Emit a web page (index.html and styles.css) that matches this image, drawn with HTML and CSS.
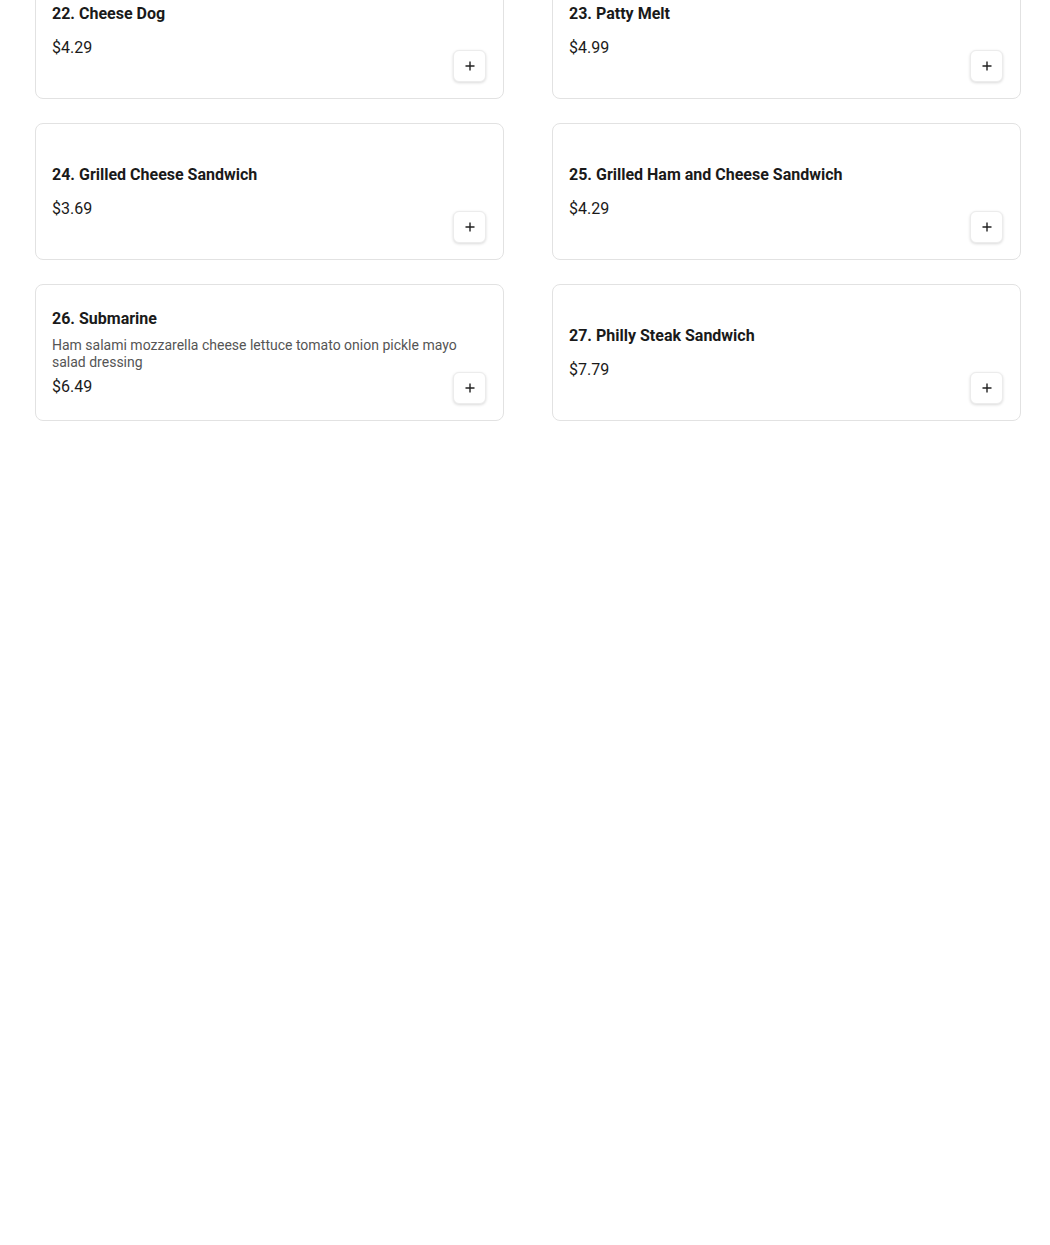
FILE: index.html
```html
<!DOCTYPE html>
<html lang="en">
<head>
    <meta charset="UTF-8">
    <meta name="viewport" content="width=device-width, initial-scale=1.0">
    <title>Menu - Sandwiches</title>
    <link rel="stylesheet" href="styles.css">
</head>
<body>
    <div class="menu-grid">
        <div class="item-card">
            <div class="item-info">
                <div class="item-name">22. Cheese Dog</div>
                <div class="item-price">$4.29</div>
            </div>
            <button class="add-btn" aria-label="Add"><svg viewBox="0 0 12 12" width="12" height="12"><path d="M6 1.5v9M1.5 6h9" stroke="#222" stroke-width="1.4" fill="none"/></svg></button>
        </div>
        <div class="item-card">
            <div class="item-info">
                <div class="item-name">23. Patty Melt</div>
                <div class="item-price">$4.99</div>
            </div>
            <button class="add-btn" aria-label="Add"><svg viewBox="0 0 12 12" width="12" height="12"><path d="M6 1.5v9M1.5 6h9" stroke="#222" stroke-width="1.4" fill="none"/></svg></button>
        </div>
        <div class="item-card">
            <div class="item-info">
                <div class="item-name">24. Grilled Cheese Sandwich</div>
                <div class="item-price">$3.69</div>
            </div>
            <button class="add-btn" aria-label="Add"><svg viewBox="0 0 12 12" width="12" height="12"><path d="M6 1.5v9M1.5 6h9" stroke="#222" stroke-width="1.4" fill="none"/></svg></button>
        </div>
        <div class="item-card">
            <div class="item-info">
                <div class="item-name">25. Grilled Ham and Cheese Sandwich</div>
                <div class="item-price">$4.29</div>
            </div>
            <button class="add-btn" aria-label="Add"><svg viewBox="0 0 12 12" width="12" height="12"><path d="M6 1.5v9M1.5 6h9" stroke="#222" stroke-width="1.4" fill="none"/></svg></button>
        </div>
        <div class="item-card">
            <div class="item-info">
                <div class="item-name">26. Submarine</div>
                <div class="item-desc">Ham salami mozzarella cheese lettuce tomato onion pickle mayo salad dressing</div>
                <div class="item-price">$6.49</div>
            </div>
            <button class="add-btn" aria-label="Add"><svg viewBox="0 0 12 12" width="12" height="12"><path d="M6 1.5v9M1.5 6h9" stroke="#222" stroke-width="1.4" fill="none"/></svg></button>
        </div>
        <div class="item-card">
            <div class="item-info">
                <div class="item-name">27. Philly Steak Sandwich</div>
                <div class="item-price">$7.79</div>
            </div>
            <button class="add-btn" aria-label="Add"><svg viewBox="0 0 12 12" width="12" height="12"><path d="M6 1.5v9M1.5 6h9" stroke="#222" stroke-width="1.4" fill="none"/></svg></button>
        </div>
    </div>
</body>
</html>
```

FILE: styles.css
```css
body {
    font-family: Roboto, "Liberation Sans", Arial, sans-serif;
    background: #fff;
    color: #1a1a1a;
    margin: 0;
}
.menu-grid {
    display: grid;
    grid-template-columns: 1fr 1fr;
    column-gap: 48px;
    row-gap: 24px;
    margin-top: -38px;
    padding: 0 29px 0 35px;
}
.item-card {
    position: relative;
    display: flex;
    align-items: center;
    height: 137px;
    box-sizing: border-box;
    padding: 16px;
    border: 1px solid #e2e2e2;
    border-radius: 8px;
    background: #fff;
}
.item-info {
    display: flex;
    flex-direction: column;
    flex: 1;
}
.item-name {
    font-size: 16px;
    font-weight: 700;
    line-height: 20px;
    margin-bottom: 8px;
}
.item-desc {
    font-size: 14px;
    line-height: 17px;
    color: #555;
}
.item-price {
    font-size: 16px;
    line-height: 20px;
    margin-top: 6px;
}
.add-btn {
    position: absolute;
    right: 17px;
    bottom: 16px;
    display: flex;
    align-items: center;
    justify-content: center;
    width: 33px;
    height: 32px;
    padding: 0;
    background: #fff;
    border: 1px solid #ececec;
    border-radius: 6px;
    box-shadow: 0 1px 3px rgba(0, 0, 0, 0.15);
    cursor: pointer;
}
.add-btn:hover {
    background: #f6f6f6;
}
```
